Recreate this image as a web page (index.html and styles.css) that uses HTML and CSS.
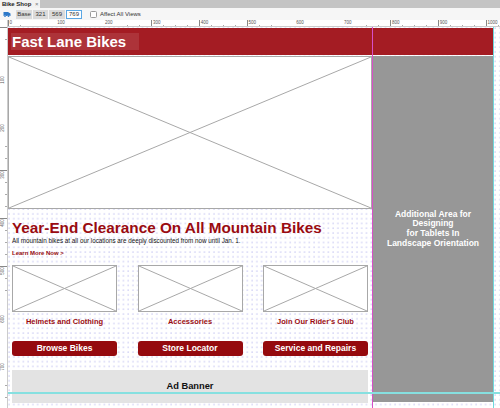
FILE: index.html
```html
<!DOCTYPE html>
<html>
<head>
<meta charset="utf-8">
<link rel="stylesheet" href="styles.css">
</head>
<body>
<div class="tabbar"><div class="tab">Bike Shop <span class="tab-x">×</span></div></div>
<div class="toolbar">
  <svg class="tool-icon" width="8" height="6" viewBox="0 0 8 6"><path d="M0.5 1 H5 L7.5 2.5 V5 H6.5 A1 1 0 0 0 4.5 5 H3 A1 1 0 0 0 1 5 H0.5 Z" fill="#2c78c8"/><circle cx="2" cy="5" r="0.9" fill="#2c78c8"/><circle cx="5.5" cy="5" r="0.9" fill="#2c78c8"/></svg>
  <div class="seg">
    <span class="seg-btn w-base">Base</span>
    <span class="seg-btn w-a">321</span>
    <span class="seg-btn w-b">569</span>
    <span class="seg-btn w-b sel">769</span>
  </div>
  <span class="check"></span>
  <span class="check-label">Affect All Views</span>
</div>
<div class="hruler-row">
  <div class="corner"></div>
  <div class="hruler">
    <span class="hl">0</span><span class="hl">100</span><span class="hl">200</span><span class="hl">300</span><span class="hl">400</span><span class="hl">500</span><span class="hl">600</span><span class="hl">700</span><span class="hl">800</span><span class="hl">900</span><span class="hl">1000</span>
  </div>
</div>
<div class="work">
  <div class="vruler">
    <span class="vl"></span><span class="vl">100</span><span class="vl">200</span><span class="vl">300</span><span class="vl">400</span><span class="vl">500</span><span class="vl">600</span><span class="vl">700</span>
  </div>
  <div class="canvas">
    <div class="header"><div class="brand">Fast Lane Bikes</div></div>
    <div class="body-row">
      <div class="main">
        <div class="hero ph">
          <svg width="100%" height="100%" viewBox="0 0 100 100" preserveAspectRatio="none"><line x1="0" y1="0" x2="100" y2="100" stroke="#a8a8a8" stroke-width="1" vector-effect="non-scaling-stroke"/><line x1="100" y1="0" x2="0" y2="100" stroke="#a8a8a8" stroke-width="1" vector-effect="non-scaling-stroke"/></svg>
        </div>
        <div class="content">
          <h1 class="headline">Year-End Clearance On All Mountain Bikes</h1>
          <p class="sub">All mountain bikes at all our locations are deeply discounted from now until Jan. 1.</p>
          <p class="learn">Learn More Now &gt;</p>
          <div class="grid3 thumbs">
            <div class="thumb ph"><svg width="100%" height="100%" viewBox="0 0 100 100" preserveAspectRatio="none"><line x1="0" y1="0" x2="100" y2="100" stroke="#a8a8a8" stroke-width="1" vector-effect="non-scaling-stroke"/><line x1="100" y1="0" x2="0" y2="100" stroke="#a8a8a8" stroke-width="1" vector-effect="non-scaling-stroke"/></svg></div>
            <div class="thumb ph"><svg width="100%" height="100%" viewBox="0 0 100 100" preserveAspectRatio="none"><line x1="0" y1="0" x2="100" y2="100" stroke="#a8a8a8" stroke-width="1" vector-effect="non-scaling-stroke"/><line x1="100" y1="0" x2="0" y2="100" stroke="#a8a8a8" stroke-width="1" vector-effect="non-scaling-stroke"/></svg></div>
            <div class="thumb ph"><svg width="100%" height="100%" viewBox="0 0 100 100" preserveAspectRatio="none"><line x1="0" y1="0" x2="100" y2="100" stroke="#a8a8a8" stroke-width="1" vector-effect="non-scaling-stroke"/><line x1="100" y1="0" x2="0" y2="100" stroke="#a8a8a8" stroke-width="1" vector-effect="non-scaling-stroke"/></svg></div>
          </div>
          <div class="grid3 labels">
            <span class="label">Helmets and Clothing</span>
            <span class="label">Accessories</span>
            <span class="label">Join Our Rider's Club</span>
          </div>
          <div class="grid3 buttons">
            <span class="btn">Browse Bikes</span>
            <span class="btn">Store Locator</span>
            <span class="btn">Service and Repairs</span>
          </div>
          <div class="banner">Ad Banner</div>
        </div>
      </div>
      <div class="panel">Additional Area for<br>Designing<br>for Tablets In<br>Landscape Orientation</div>
    </div>
  </div>
</div>
<div class="guide guide-magenta"></div>
<div class="guide guide-cyan-v"></div>
<div class="guide guide-cyan-h"></div>
</body>
</html>
```
FILE: styles.css
```css
* { box-sizing: border-box; }
html, body { margin: 0; padding: 0; }
body {
  width: 500px;
  height: 408px;
  overflow: hidden;
  position: relative;
  background: #fff;
  font-family: "Liberation Sans", Arial, sans-serif;
  color: #000;
}
.tabbar {
  height: 8px;
  background: #c4c4c4;
  display: flex;
}
.tab {
  width: 40px;
  height: 8px;
  background: #f2f2f2;
  font-size: 6px;
  font-weight: bold;
  line-height: 8px;
  padding-left: 2px;
  color: #222;
}
.tab-x { color: #777; font-weight: normal; margin-left: 2px; }
.toolbar {
  height: 12px;
  background: #f6f6f6;
  display: flex;
  align-items: center;
  padding-left: 3px;
  font-size: 6px;
  color: #333;
}
.tool-icon { display: block; margin-right: 5px; }
.seg { display: flex; height: 9px; }
.seg-btn {
  background: #dadada;
  line-height: 9px;
  text-align: center;
  margin-right: 1px;
  color: #333;
}
.w-base { width: 16px; }
.w-a { width: 15px; }
.w-b { width: 16px; }
.seg-btn.sel {
  background: #fff;
  border: 1px solid #5aa7e4;
  line-height: 7px;
}
.check {
  width: 7px;
  height: 7px;
  border: 1px solid #9a9a9a;
  border-radius: 1.5px;
  background: #fff;
  margin-left: 7px;
}
.check-label { margin-left: 3px; }
.hruler-row { display: flex; height: 7px; }
.corner { width: 8px; height: 7px; background: #fff; border-right: 1px solid #ccc; }
.hruler {
  flex: 1;
  display: flex;
  overflow: hidden;
  background-color: #fff;
  background-image:
    repeating-linear-gradient(90deg, #888 0 0.6px, transparent 0.6px 47.8px),
    repeating-linear-gradient(90deg, #aaa 0 0.6px, transparent 0.6px 11.95px);
  background-size: 100% 7px, 100% 2px;
  background-position: 0 0, 0 5px;
  background-repeat: no-repeat;
  border-bottom: 1px solid #ccc;
}
.hl {
  flex: 0 0 47.8px;
  font-size: 4.5px;
  line-height: 5px;
  padding-left: 1.5px;
  color: #555;
}
.hl:last-child { flex-basis: 10px; }
.work { display: flex; height: 381px; }
.vruler {
  width: 8px;
  display: flex;
  flex-direction: column;
  overflow: hidden;
  background-color: #fff;
  background-image:
    repeating-linear-gradient(180deg, #888 0 0.6px, transparent 0.6px 47.8px),
    repeating-linear-gradient(180deg, #aaa 0 0.6px, transparent 0.6px 11.95px);
  background-size: 8px 100%, 2px 100%;
  background-position: 0 0, 5px 0;
  background-repeat: no-repeat;
  border-right: 1px solid #ccc;
}
.vl {
  flex: 0 0 47.8px;
  font-size: 4.5px;
  color: #555;
  writing-mode: vertical-rl;
  transform: rotate(180deg);
  text-align: right;
  padding-bottom: 1.5px;
  line-height: 5px;
}
.canvas {
  flex: 1;
  background-color: #fff;
  background-image: radial-gradient(circle at 1px 1px, #d2d2f4 0.55px, transparent 0.85px);
  background-size: 4.78px 4.78px;
  padding-top: 1px;
}
.header {
  width: 485px;
  height: 27px;
  background: #a41c23;
  padding: 5px 0 0 3px;
}
.brand {
  display: inline-block;
  height: 17px;
  padding: 0 13px 0 1px;
  background: rgba(255, 255, 255, 0.1);
  color: #fff;
  font-size: 15px;
  font-weight: bold;
  line-height: 17px;
  white-space: nowrap;
}
.body-row { display: flex; margin-top: 1px; }
.main { width: 365px; }
.ph { background: #fff; border: 1px solid #a8a8a8; }
.ph svg { display: block; }
.hero { width: 364px; height: 153px; }
.content { padding: 0 4px; width: 364px; }
.headline {
  margin: 10px 0 0;
  font-size: 15.3px;
  line-height: 17px;
  font-weight: bold;
  color: #9a0b10;
  white-space: nowrap;
}
.sub {
  margin: 0.5px 0 0;
  font-size: 6.3px;
  line-height: 7px;
  color: #111;
  white-space: nowrap;
}
.learn {
  margin: 6.5px 0 0;
  font-size: 6px;
  line-height: 7px;
  font-weight: bold;
  color: #950b10;
}
.grid3 {
  display: grid;
  grid-template-columns: 105px 105px 105px;
  column-gap: 20.5px;
}
.thumbs { margin-top: 8px; }
.thumb { height: 47px; }
.labels { margin-top: 5.4px; }
.label {
  text-align: center;
  font-size: 7.5px;
  line-height: 9px;
  font-weight: bold;
  color: #9a0b10;
  white-space: nowrap;
}
.buttons { margin-top: 14.6px; }
.btn {
  height: 15px;
  background: #950a0e;
  border-radius: 3px;
  color: #fff;
  font-size: 8.5px;
  font-weight: bold;
  line-height: 15px;
  text-align: center;
  white-space: nowrap;
}
.banner {
  margin-top: 14px;
  height: 33px;
  background: #e3e3e3;
  font-size: 9.3px;
  font-weight: bold;
  line-height: 33px;
  text-align: center;
  color: #111;
}
.panel {
  width: 120px;
  height: 346px;
  background: #979797;
  color: #fff;
  font-size: 8.5px;
  font-weight: bold;
  line-height: 9.6px;
  text-align: center;
  display: flex;
  align-items: center;
  justify-content: center;
}
.guide { position: absolute; }
.guide-magenta { left: 372px; top: 27px; bottom: 0; width: 1px; background: #d84fc8; }
.guide-cyan-v { left: 493px; top: 27px; bottom: 0; width: 1px; background: #6fd8dc; }
.guide-cyan-h { left: 8px; right: 0; top: 392px; height: 1.5px; background: #86e0e0; }
```
